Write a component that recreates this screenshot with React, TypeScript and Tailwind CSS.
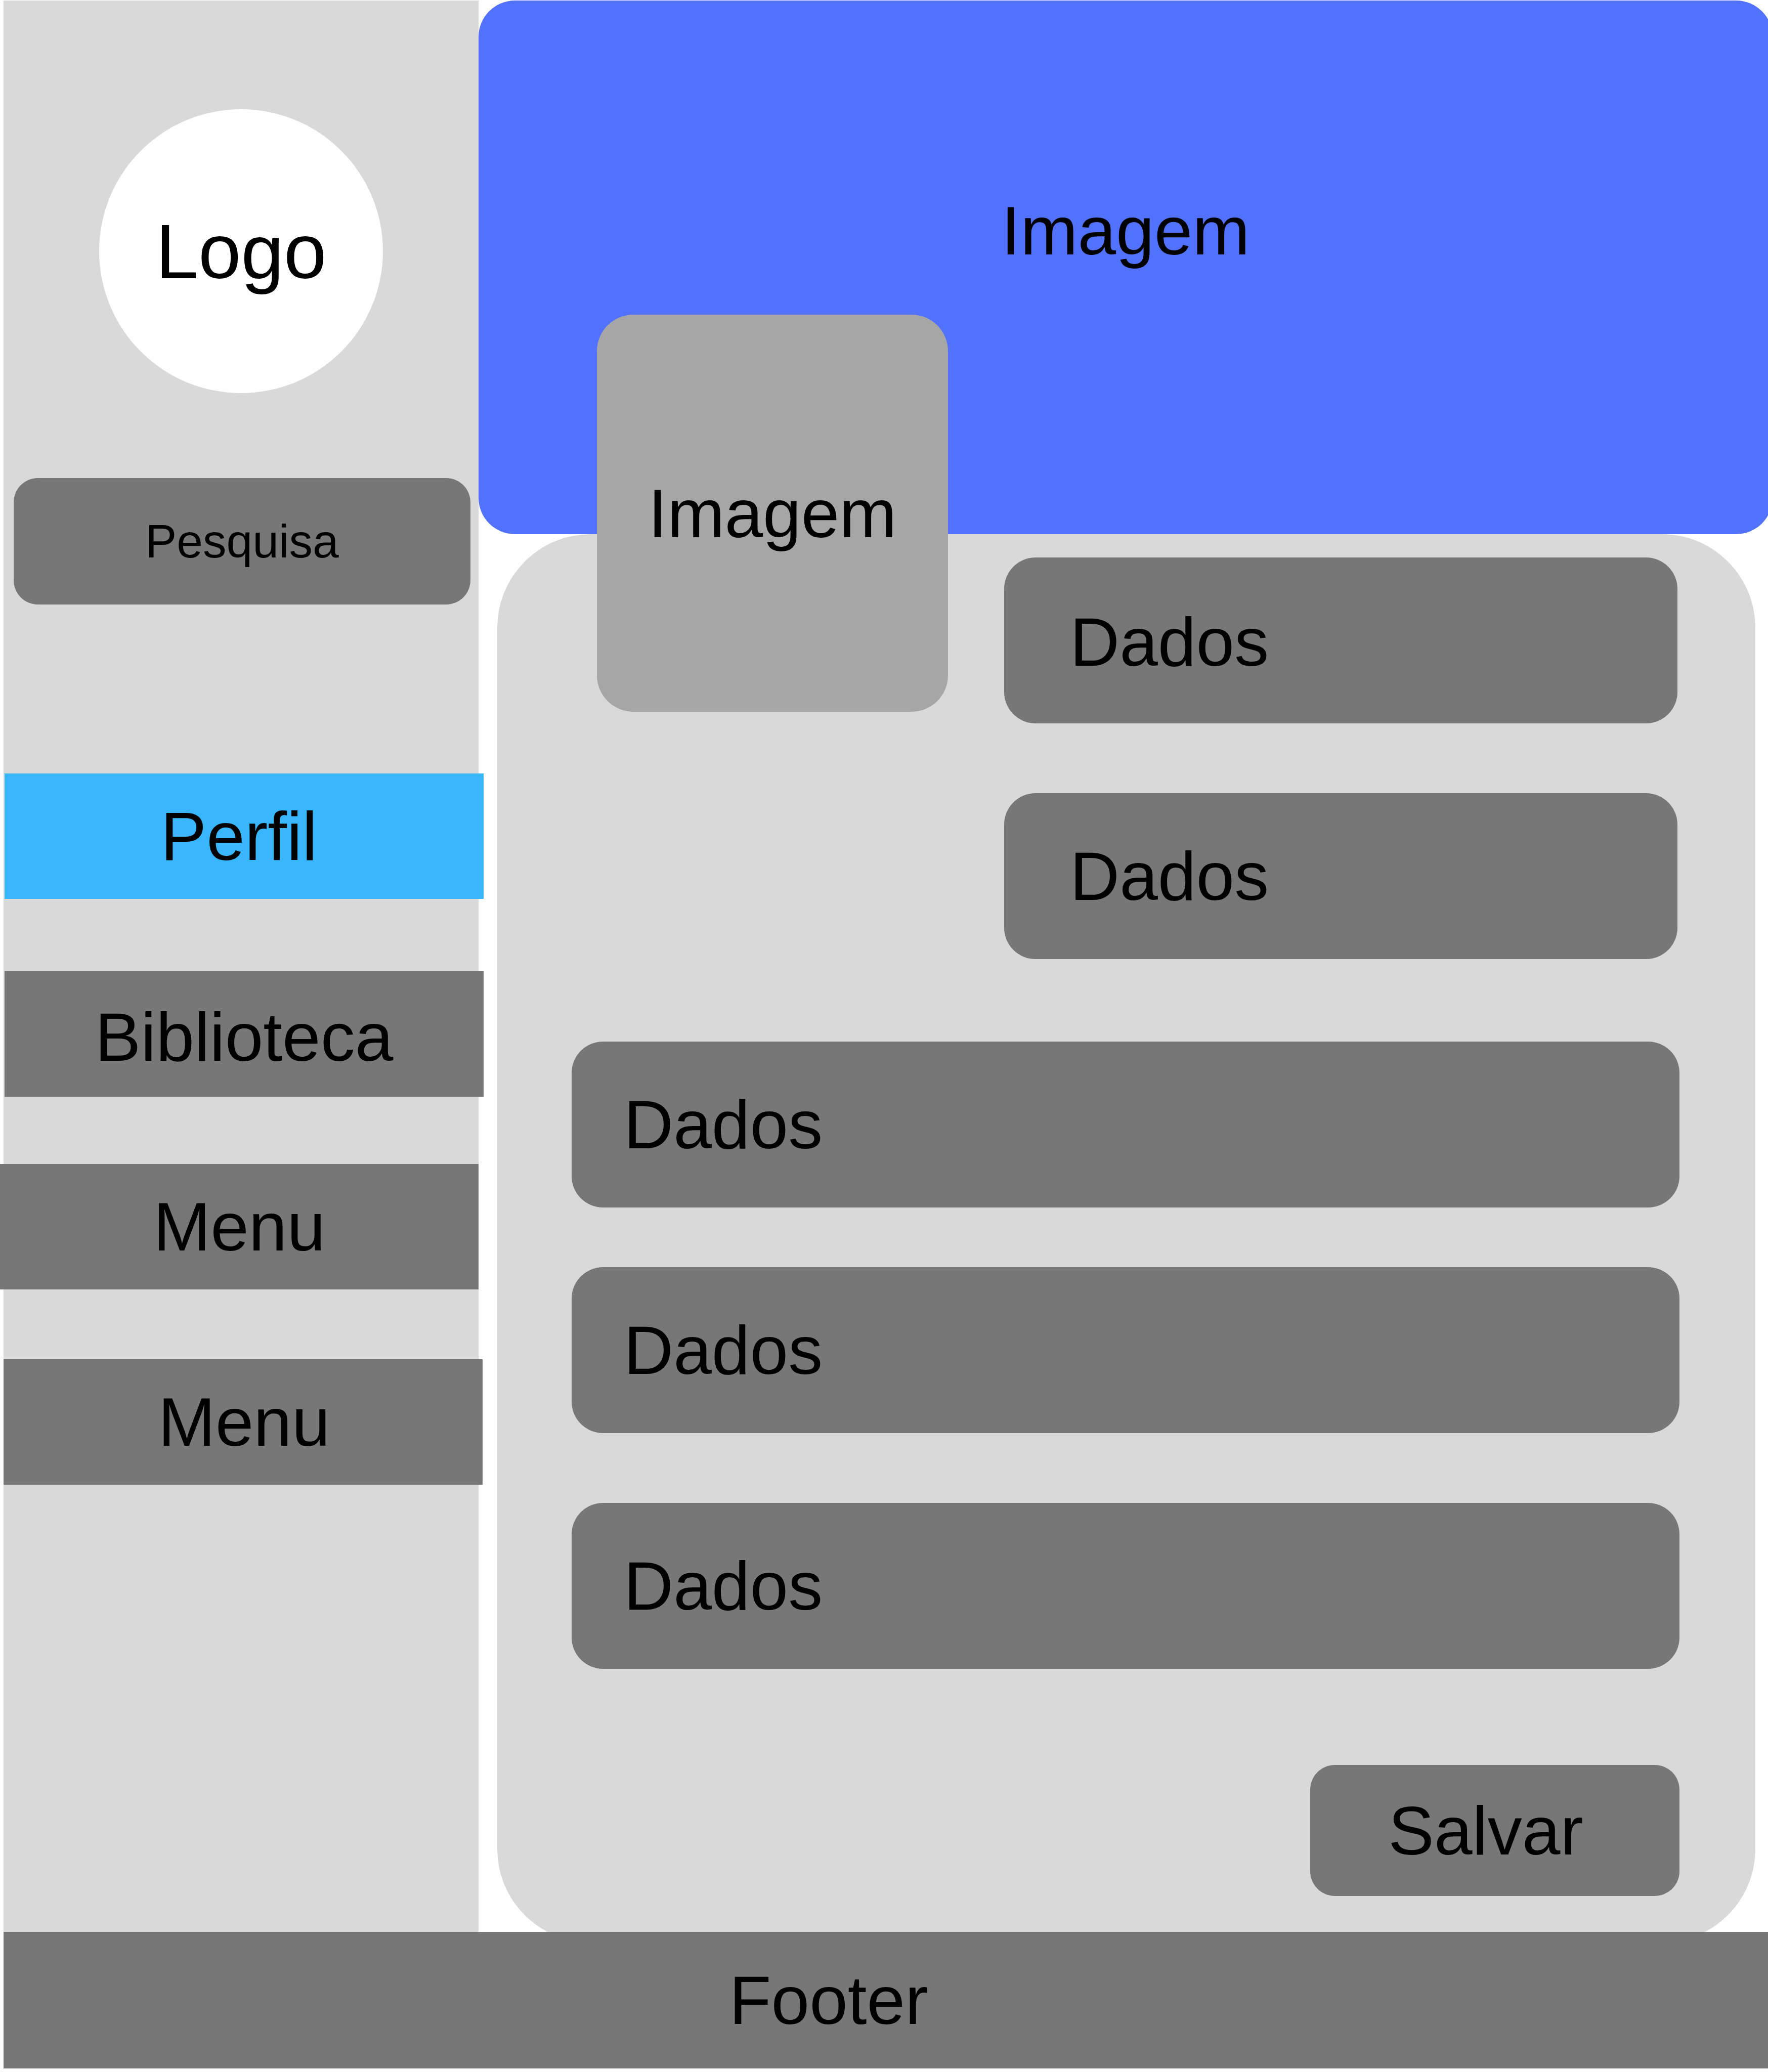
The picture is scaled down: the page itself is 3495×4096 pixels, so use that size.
import React from "react";

type MenuItem = { label: string; color: string; shape: string };

const menu: MenuItem[] = [
  { label: "Perfil", color: "bg-[#38b6ff]", shape: "ml-0.5 -mr-2.5 pr-5" },
  { label: "Biblioteca", color: "bg-[#777777]", shape: "ml-0.5 -mr-2.5 mt-[143px] pt-3" },
  { label: "Menu", color: "bg-[#777777]", shape: "-ml-[7px] mt-[133px]" },
  { label: "Menu", color: "bg-[#777777]", shape: "-mr-2 mt-[138px] pl-1" },
];

function Field({ name, className }: { name: string; className: string }) {
  return (
    <input
      type="text"
      name={name}
      aria-label="Dados"
      placeholder="Dados"
      className={`block h-[328px] rounded-[62px] bg-[#777777] text-black placeholder:text-black placeholder:opacity-100 ${className}`}
    />
  );
}

function Sidebar() {
  return (
    <aside className="relative z-10 ml-[7px] mt-px flex w-[939px] shrink-0 flex-col bg-[#d9d9d9]">
      <div className="mx-auto mt-[215px] flex size-[561px] items-center justify-center rounded-full bg-white text-[152px]">
        Logo
      </div>
      <input
        type="search"
        name="pesquisa"
        aria-label="Pesquisa"
        placeholder="Pesquisa"
        className="ml-5 mr-4 mt-[168px] h-[250px] rounded-[48px] bg-[#777777] text-center text-[93px] text-black placeholder:text-black placeholder:opacity-100 [&::-webkit-search-cancel-button]:hidden"
      />
      <nav className="mt-[334px] flex flex-col">
        {menu.map((item, i) => (
          <a
            key={i}
            href="#"
            className={`flex h-[248px] items-center justify-center ${item.color} ${item.shape}`}
          >
            {item.label}
          </a>
        ))}
      </nav>
    </aside>
  );
}

function Profile() {
  return (
    <main className="min-w-0 grow">
      <header className="-mr-[9px] mt-px flex h-[1055px] justify-center rounded-[72px] bg-[#5271ff] pt-[379px]">
        Imagem
      </header>
      <form
        className="-mb-[21px] ml-[37px] mr-[25px] h-[2784px] rounded-[185px] bg-[#d9d9d9] pl-[147px] pr-[150px]"
        onSubmit={(e) => e.preventDefault()}
      >
        <div className="flex items-start justify-between">
          <div className="-mt-[434px] ml-[50px] flex h-[785px] w-[694px] shrink-0 items-center justify-center rounded-[72px] bg-[#a6a6a6]">
            Imagem
          </div>
          <div className="ml-[111px] mr-1 mt-[46px] flex grow flex-col gap-[138px]">
            <Field name="dados1" className="w-full pl-[130px] pt-1.5" />
            <Field name="dados2" className="w-full pl-[130px]" />
          </div>
        </div>
        <Field name="dados3" className="mt-[163px] w-full pl-[103px]" />
        <Field name="dados4" className="mt-[118px] w-full pl-[103px]" />
        <Field name="dados5" className="mt-[138px] w-full pl-[103px]" />
        <button
          type="submit"
          className="ml-auto mt-[190px] flex h-[259px] w-[730px] items-center justify-center rounded-[49px] bg-[#777777] pr-9"
        >
          Salvar
        </button>
      </form>
    </main>
  );
}

export default function App() {
  return (
    <div className="overflow-hidden bg-white pb-[7px] font-['Liberation_Sans',Arial,sans-serif] text-[136px] leading-[152px] text-black">
      <div className="flex">
        <Sidebar />
        <Profile />
      </div>
      <footer className="relative ml-[7px] flex h-[270px] items-center justify-center bg-[#777777] pr-[226px]">
        Footer
      </footer>
    </div>
  );
}
